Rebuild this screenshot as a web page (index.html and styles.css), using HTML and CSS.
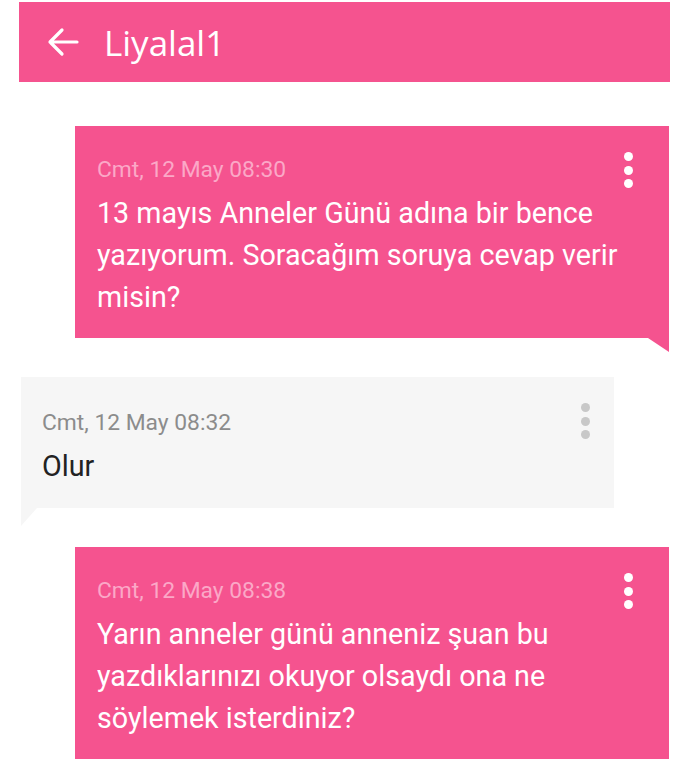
FILE: index.html
```html
<!DOCTYPE html>
<html lang="tr">
<head>
<meta charset="utf-8">
<title>Liyalal1</title>
<link rel="stylesheet" href="styles.css">
</head>
<body>
<header class="topbar">
  <svg class="back" viewBox="0 0 32 30" width="32" height="30" aria-hidden="true">
    <path d="M3 15H30M15 3L3 15L15 27" fill="none" stroke="#fff" stroke-width="3.2" stroke-linecap="round" stroke-linejoin="round"/>
  </svg>
  <h1 class="title">Liyalal1</h1>
</header>
<main class="chat">
  <div class="bubble bubble-out">
    <div class="body">
      <div class="time">Cmt, 12 May 08:30</div>
      <div class="msg">13 mayıs Anneler Günü adına bir bence yazıyorum. Soracağım soruya cevap verir misin?</div>
    </div>
    <div class="dots"><i></i><i></i><i></i></div>
  </div>
  <div class="bubble bubble-in">
    <div class="body">
      <div class="time">Cmt, 12 May 08:32</div>
      <div class="msg">Olur</div>
    </div>
    <div class="dots"><i></i><i></i><i></i></div>
  </div>
  <div class="bubble bubble-out">
    <div class="body">
      <div class="time">Cmt, 12 May 08:38</div>
      <div class="msg">Yarın anneler günü anneniz şuan bu yazdıklarınızı okuyor olsaydı ona ne söylemek isterdiniz?</div>
    </div>
    <div class="dots"><i></i><i></i><i></i></div>
  </div>
</main>
</body>
</html>
```
FILE: styles.css
```css
* { box-sizing: border-box; }
html, body { margin: 0; padding: 0; background: #fff; }
body { font-family: Roboto, "Noto Sans", sans-serif; overflow: hidden; }

.topbar {
  margin: 2px 20px 0 19px;
  height: 80px;
  background: #f5538f;
  display: flex;
  align-items: center;
  padding-left: 28px;
  gap: 25px;
}
.back { display: block; flex: none; }
.title {
  margin: 0;
  font-family: "Open Sans", sans-serif;
  font-weight: 400;
  font-size: 35px;
  color: #fff;
  letter-spacing: 0;
}

.chat {
  display: flex;
  flex-direction: column;
  gap: 39px;
  padding-top: 44px;
}

.bubble {
  position: relative;
  display: grid;
  grid-template-columns: 1fr auto;
}
.bubble-out {
  margin: 0 21px 0 75px;
  background: #f5538f;
  padding: 29px 0 20px 22px;
}
.bubble-in {
  margin: 0 76px 0 21px;
  background: #f6f6f6;
  padding: 31px 0 21px 21px;
}
.bubble::after {
  content: "";
  position: absolute;
  top: 100%;
}
.bubble-out::after {
  right: 0;
  width: 21px;
  height: 14px;
  background: #f5538f;
  clip-path: polygon(0 0, 100% 0, 100% 100%);
}
.bubble-in::after {
  left: 0;
  width: 16px;
  height: 18px;
  background: #f6f6f6;
  clip-path: polygon(0 0, 100% 0, 0 100%);
}

.time {
  font-size: 22.8px;
  line-height: 30px;
}
.msg {
  margin-top: 7px;
  font-size: 28.7px;
  line-height: 42px;
}
.bubble-out .time { color: #fba8c7; }
.bubble-out .msg { color: #fff; }
.bubble-in .time { color: #8c8c8c; }
.bubble-in .msg { color: #222; }

.dots {
  display: flex;
  flex-direction: column;
  gap: 4.5px;
  margin-top: -3px;
}
.bubble-out .dots { padding: 0 36px 0 0; }
.bubble-in .dots { padding: 0 24px 0 0; margin-top: -5px; }
.dots i {
  display: block;
  width: 9px;
  height: 9px;
  border-radius: 50%;
}
.bubble-out .dots i { background: #fff; }
.bubble-in .dots i { background: #c8c8c8; }
```
